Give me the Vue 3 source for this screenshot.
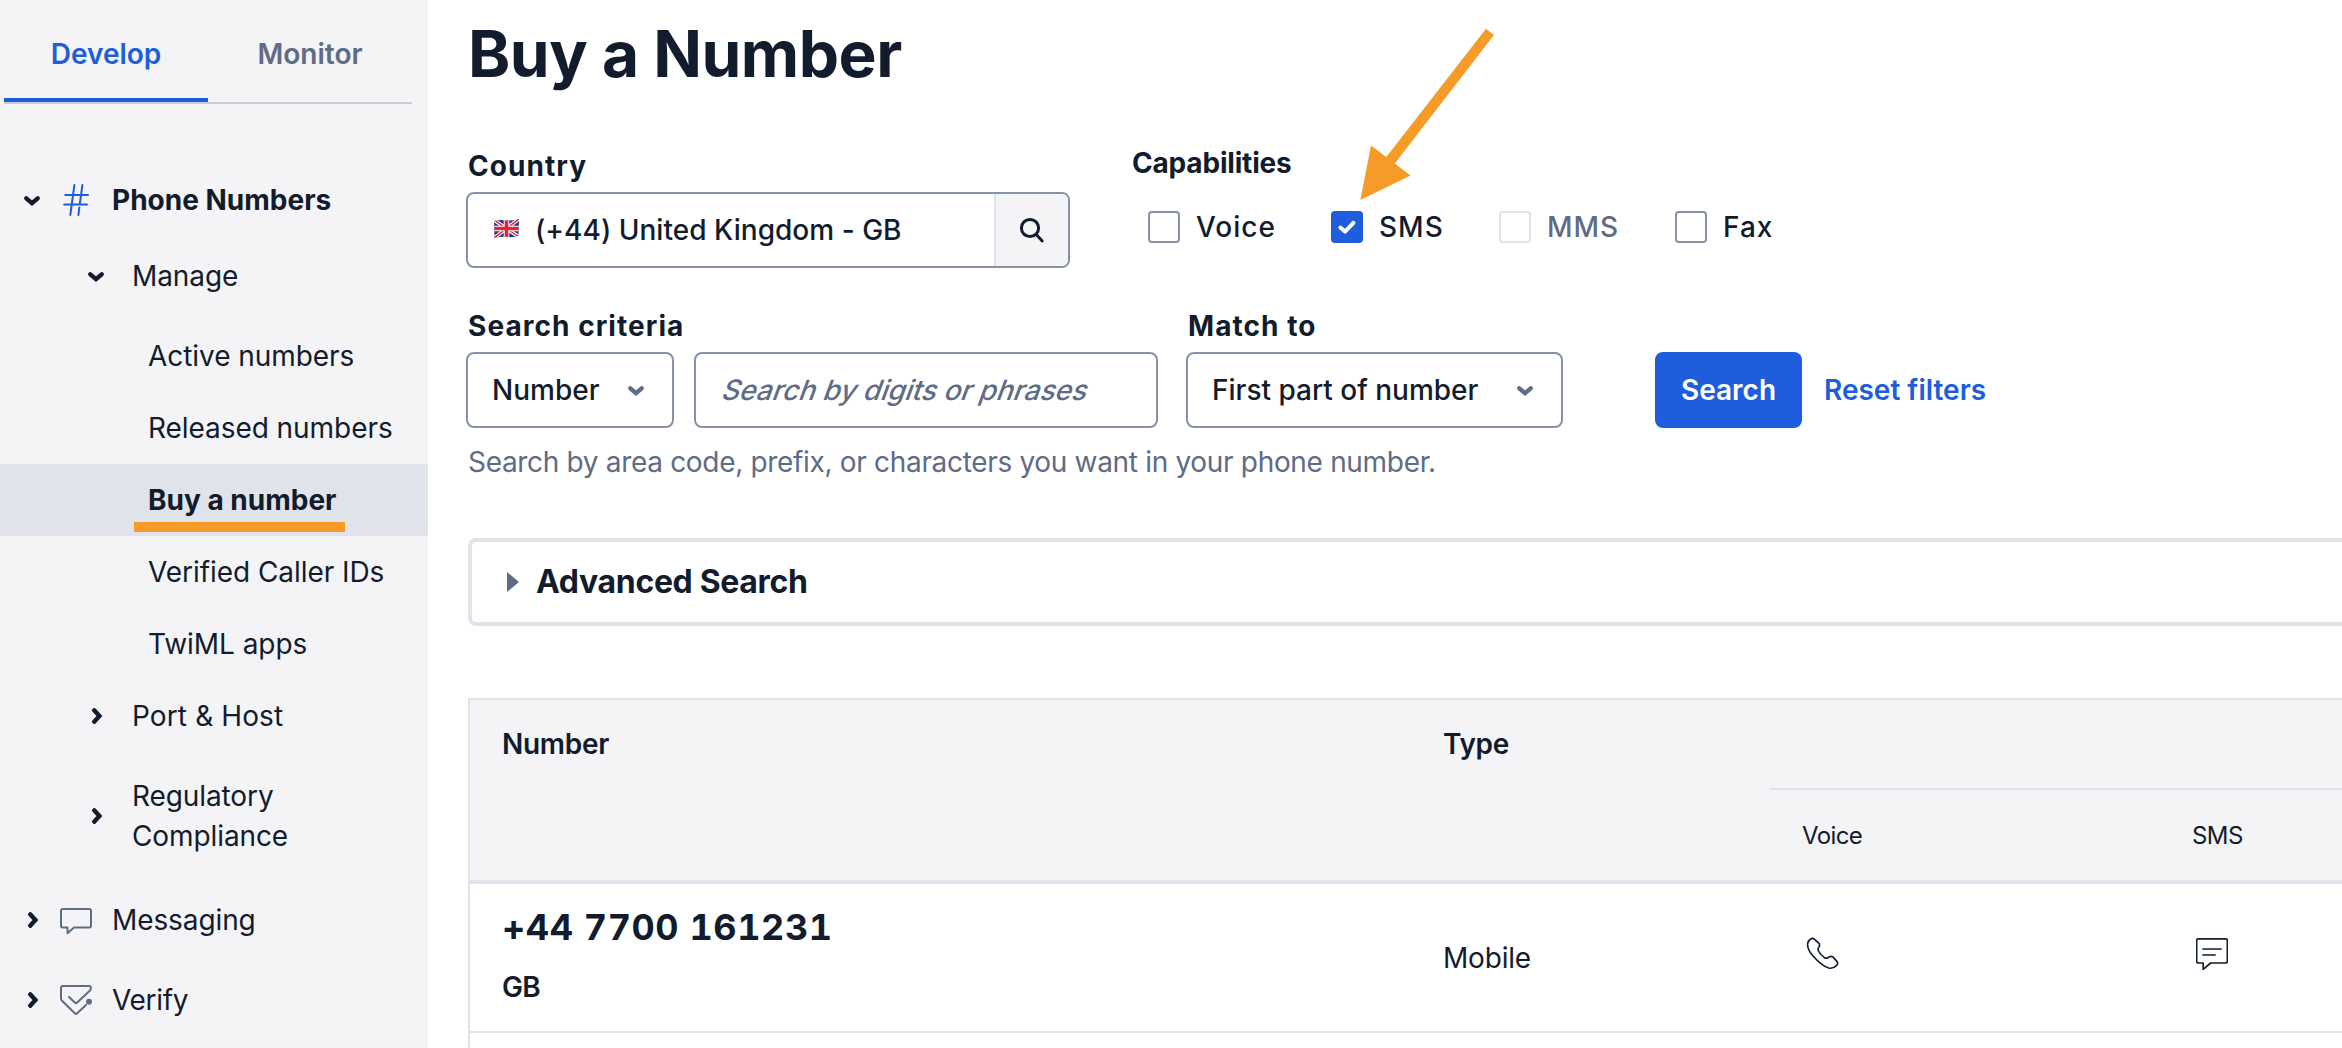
<script setup>
const numberLinks = [
  { label: 'Active numbers' },
  { label: 'Released numbers' },
  { label: 'Buy a number', active: true },
  { label: 'Verified Caller IDs' },
  { label: 'TwiML apps' },
]
const capabilities = [
  { label: 'Voice' },
  { label: 'SMS', checked: true },
  { label: 'MMS', disabled: true },
  { label: 'Fax' },
]
const chevronDown = 'M6.3 10.3 12 15.2 17.7 10.3'
const chevronRight = 'M10.2 6.3 15.4 12 10.2 17.7'
</script>

<template>
  <div class="page">
    <aside class="sidebar">
      <div class="tabs">
        <div class="tab current">Develop</div>
        <div class="tab">Monitor</div>
      </div>

      <nav>
        <div class="row top phone">
          <svg class="chev" viewBox="0 0 24 24"><path :d="chevronDown" /></svg>
          <svg class="product blue" viewBox="0 0 32 32">
            <path d="M14.4 1 10.3 31M22.4 1 20.3 16.500 19.700 20.600M19.300 23.500 18.400 31M5.300 11H28M4.200 20.400H27" />
          </svg>
          <span class="bold">Phone Numbers</span>
        </div>
        <div class="row sub manage">
          <svg class="chev" viewBox="0 0 24 24"><path :d="chevronDown" /></svg>
          <span>Manage</span>
        </div>
        <div v-for="l in numberLinks" :key="l.label" class="row leaf" :class="{ active: l.active }">
          <span>{{ l.label }}</span>
          <i v-if="l.active" class="underline"></i>
        </div>
        <div class="row sub port">
          <svg class="chev" viewBox="0 0 24 24"><path :d="chevronRight" /></svg>
          <span>Port &amp; Host</span>
        </div>
        <div class="row sub regulatory">
          <svg class="chev" viewBox="0 0 24 24"><path :d="chevronRight" /></svg>
          <span>Regulatory<br />Compliance</span>
        </div>
        <div class="row top">
          <svg class="chev" viewBox="0 0 24 24"><path :d="chevronRight" /></svg>
          <svg class="product" viewBox="0 0 32 32">
            <path d="M3 5H29Q31 5 31 7V21.500Q31 23.500 29 23.500H14L7.500 29.200V23.500H3Q1 23.500 1 21.500V7Q1 5 3 5Z" />
          </svg>
          <span>Messaging</span>
        </div>
        <div class="row top verify">
          <svg class="chev" viewBox="0 0 24 24"><path :d="chevronRight" /></svg>
          <svg class="product" viewBox="0 0 32 32">
            <path d="M9 13 14.800 18.500Q16 19.600 17.200 18.500L30 6.500Q31.500 4.500 30.500 2.500Q30 2 28.500 2H3Q1 2 1 4V14.500Q1 15.800 2 16.800L14.800 29.300Q16 30.500 17.200 29.300L26 21" />
            <circle cx="29" cy="17.700" r="3" />
          </svg>
          <span>Verify</span>
        </div>
      </nav>
    </aside>

    <main>
      <h1>Buy a Number</h1>

      <div class="filters first">
        <div class="country">
          <label>Country</label>
          <div class="field combo">
            <svg class="flag" viewBox="0 0 25 19">
              <clipPath id="wave"><path d="M0 2Q6 .5 12 1.500Q18 2 25 0L24.500 17Q18 18.800 12 17.800Q6 17.200 .5 19Z" /></clipPath>
              <g clip-path="url(#wave)">
                <path fill="#233a83" d="M0 0H25V19H0Z" />
                <path stroke="#fff" stroke-width="3.600" d="M0 1 25 18M25 0 0 19" />
                <path stroke="#d8213b" stroke-width="1.400" d="M0 1 25 18M25 0 0 19" />
                <path stroke="#fff" stroke-width="5.600" d="M12.500 0V19M0 9.500H25" />
                <path stroke="#dd2540" stroke-width="3.600" d="M12.500 0V19M0 9.500H25" />
              </g>
            </svg>
            <span class="value">(+44) United Kingdom - GB</span>
            <span class="addon">
              <svg viewBox="0 0 28 28"><circle cx="12" cy="12" r="8.600" /><path d="M18.300 18.600 24.200 25" /></svg>
            </span>
          </div>
        </div>
        <div class="caps">
          <div class="caps-title">Capabilities</div>
          <div class="checks">
            <div v-for="c in capabilities" :key="c.label" class="check" :class="{ checked: c.checked, disabled: c.disabled }">
              <span class="box">
                <svg v-if="c.checked" viewBox="0 0 32 32"><path d="M9.300 16.600 14 20.600 22.400 11.800" /></svg>
              </span>
              <span>{{ c.label }}</span>
            </div>
          </div>
        </div>
      </div>

      <div class="filters second">
        <div>
          <label>Search criteria</label>
          <div class="pair">
            <div class="field select criteria">
              <span>Number</span>
              <svg class="chev" viewBox="0 0 24 24"><path :d="chevronDown" /></svg>
            </div>
            <div class="field query"><span>Search by digits or phrases</span></div>
          </div>
        </div>
        <div>
          <label>Match to</label>
          <div class="field select match">
            <span>First part of number</span>
            <svg class="chev" viewBox="0 0 24 24"><path :d="chevronDown" /></svg>
          </div>
        </div>
        <div class="search">Search</div>
        <div class="reset">Reset filters</div>
      </div>
      <p class="help">Search by area code, prefix, or characters you want in your phone number.</p>

      <div class="advanced">
        <svg viewBox="0 0 12 20"><path d="M0 0 12 10 0 20Z" /></svg>
        <span>Advanced Search</span>
      </div>

      <div class="table">
        <div class="thead">
          <div class="th">Number</div>
          <div class="th">Type</div>
          <div class="group">
            <div class="group-top"></div>
            <div class="group-cols"><span>Voice</span><span>SMS</span></div>
          </div>
        </div>
        <div class="tr">
          <div class="td number">
            <strong>+44 7700 161231</strong>
            <b>GB</b>
          </div>
          <div class="td">Mobile</div>
          <div class="td">
            <svg class="cap phone-icon" viewBox="46 34 100 100">
              <path d="M60 40Q66 36 72 41L84 52Q89 57 86 63Q81 69 83 75Q88 86 101 96Q107 100 112 97Q120 90 128 95L139 107Q145 114 139 120Q128 131 115 128Q94 122 66 90Q49 70 51 54Q52 46 60 40Z" />
            </svg>
          </div>
          <div class="td">
            <svg class="cap" viewBox="48 39 96 96">
              <path d="M55 41.500H137Q142 41.500 142 46.500V109Q142 114 137 114H92L69.500 133V114H55Q50 114 50 109V46.500Q50 41.500 55 41.500ZM67 72H125M67 90H107" />
            </svg>
          </div>
        </div>
      </div>
    </main>

    <svg class="arrow" viewBox="0 0 140 180">
      <path d="M.4 180 11 125.500 26.300 137 126 8.700 134 15 34.800 143.500 50.500 155.500Z" />
    </svg>
  </div>
</template>

<style>
body {
  margin: 0;
  background: #fff;
}
</style>

<style scoped>
.page {
  position: relative;
  display: flex;
  height: 1048px;
  overflow: hidden;
  font: 400 28px/40px Inter, "Liberation Sans", sans-serif;
  color: #121c2d;
  white-space: nowrap;
}
.page * { box-sizing: border-box; }
svg { display: block; flex: none; fill: none; }

.sidebar {
  flex: none;
  width: 428px;
  background: #f4f4f6;
}
.tabs {
  display: flex;
  width: 408px;
  height: 104px;
  margin-left: 4px;
  border-bottom: 2px solid #cacdd8;
}
.tab {
  flex: 1;
  padding-top: 34px;
  text-align: center;
  font-weight: 600;
  color: #606b85;
}
.tab.current {
  color: #1e5ddc;
  border-bottom: 4px solid #1e5ddc;
}
nav { padding-top: 56px; }
.row {
  position: relative;
  display: flex;
  align-items: center;
  height: 80px;
  letter-spacing: -.1px;
}
.verify { letter-spacing: -.3px; }
.bold { font-weight: 700; letter-spacing: 0; }
.chev {
  width: 24px;
  height: 24px;
  stroke: #121c2d;
  stroke-width: 4.4;
  stroke-linecap: round;
}
.top { padding-left: 20px; }
.product {
  width: 32px;
  height: 32px;
  margin: 0 20px 0 16px;
  stroke: #606b85;
  stroke-width: 2;
  stroke-linecap: round;
  stroke-linejoin: round;
}
.product circle { fill: #606b85; stroke: none; }
.product.blue { stroke: #1e5ddc; }
.sub {
  height: 72px;
  padding-left: 84px;
  gap: 24px;
}
.port { letter-spacing: .12px; }
.manage { margin-bottom: 8px; }
.leaf {
  height: 72px;
  padding-left: 148px;
  letter-spacing: -.06px;
}
.leaf.active { font-weight: 700; letter-spacing: 0; background: #e1e3ea; }
.underline {
  position: absolute;
  left: 134px;
  top: 58px;
  width: 211px;
  height: 10px;
  background: #f69a28;
}
.regulatory { height: 128px; }

main {
  flex: none;
  width: 1914px;
  padding-left: 38px;
}
h1 {
  margin: 14px 0 48px 2px;
  font-size: 64px;
  line-height: 80px;
  font-weight: 700;
  letter-spacing: -.5px;
}
.filters { display: flex; }
.filters label {
  display: block;
  height: 40px;
  margin: 0 0 6px 2px;
  font-weight: 700;
  letter-spacing: 1.05px;
}
.field {
  display: flex;
  align-items: center;
  height: 76px;
  border: 2px solid #8891aa;
  border-radius: 8px;
  font-weight: 500;
}
.country { padding-top: 4px; }
.combo { width: 604px; padding-left: 26px; overflow: hidden; }
.flag { width: 25px; height: 19px; margin-top: -3px; }
.value { flex: 1; margin-left: 16px; letter-spacing: .03px; }
.addon {
  display: flex;
  align-items: center;
  justify-content: center;
  width: 74px;
  height: 72px;
  border-left: 2px solid #e1e3ea;
  background: #f4f4f6;
}
.addon svg {
  width: 28px;
  height: 28px;
  stroke: #121c2d;
  stroke-width: 3;
  stroke-linecap: round;
}
.caps { margin-left: 62px; }
.caps-title { margin-top: 1px; font-weight: 700; letter-spacing: -.18px; }
.checks {
  display: grid;
  grid-template-columns: 183px 168px 176px auto;
  margin: 24px 0 0 16px;
}
.check {
  display: flex;
  align-items: center;
  gap: 16px;
  font-weight: 500;
  letter-spacing: 1px;
}
.box {
  width: 32px;
  height: 32px;
  border: 2px solid #8891aa;
  border-radius: 4px;
}
.checked .box { border: 0; background: #1e5ddc; }
.box svg {
  width: 32px;
  height: 32px;
  stroke: #fff;
  stroke-width: 4;
  stroke-linecap: round;
  stroke-linejoin: round;
}
.disabled { color: #606b85; }
.disabled .box { border-color: #e1e3ea; }

.second { margin-top: 38px; }
.pair { display: flex; gap: 20px; }
.select { justify-content: space-between; padding: 0 24px; }
.select .chev { stroke: #606b85; }
.criteria { width: 208px; }
.query {
  width: 464px;
  padding-left: 24px;
  color: #606b85;
}
.query span {
  transform: skewX(-20deg);
  transform-origin: 0 75%;
}
.second > div:nth-child(2) { margin-left: 28px; }
.match { width: 377px; }
.search {
  width: 147px;
  height: 76px;
  margin: 46px 0 0 92px;
  border-radius: 8px;
  background: #1e5ddc;
  color: #fff;
  font-weight: 600;
  line-height: 76px;
  text-align: center;
}
.reset {
  margin: 46px 0 0 22px;
  color: #1e5ddc;
  font-weight: 600;
  line-height: 76px;
}
.help {
  margin: 14px 0 0 2px;
  color: #606b85;
  letter-spacing: -.32px;
}
.advanced {
  display: flex;
  align-items: center;
  height: 88px;
  margin: 56px 0 0 2px;
  padding-left: 35px;
  border: 4px solid #e1e3ea;
  border-right: 0;
  border-radius: 8px 0 0 8px;
  font-size: 32px;
  font-weight: 700;
  letter-spacing: -.33px;
}
.advanced svg { width: 12px; height: 20px; margin-right: 17px; fill: #606b85; }

.table {
  height: 350px;
  margin: 72px 0 0 2px;
  border: solid #e1e3ea;
  border-width: 2px 0 0 2px;
}
.thead, .tr {
  display: grid;
  grid-template-columns: 941px 359px 390px 1fr;
}
.thead {
  height: 184px;
  border-bottom: 4px solid #e1e3ea;
  background: #f4f4f6;
}
.th { padding: 24px 32px; font-weight: 600; letter-spacing: -.3px; }
.group { grid-column: span 2; }
.group-top { height: 90px; border-bottom: 2px solid #e1e3ea; }
.group-cols {
  display: grid;
  grid-template-columns: 390px 1fr;
  height: 90px;
  padding-left: 32px;
  font-size: 24px;
  line-height: 92px;
  letter-spacing: -.6px;
}
.tr { height: 149px; border-bottom: 2px solid #e1e3ea; }
.td { display: flex; align-items: center; padding-left: 32px; letter-spacing: -.2px; }
.number { flex-direction: column; align-items: flex-start; padding-top: 15px; }
.number strong {
  font-size: 36px;
  line-height: 56px;
  font-variant-numeric: tabular-nums;
  letter-spacing: .58px;
}
.number b { margin-top: 12px; font-weight: 600; letter-spacing: -.6px; }
.cap {
  width: 32px;
  height: 32px;
  margin: 0 0 8px 4px;
  stroke: #121c2d;
  stroke-width: 5;
  stroke-linejoin: round;
}
.phone-icon { width: 33px; height: 33px; margin-bottom: 9px; }

.arrow {
  position: absolute;
  left: 1360px;
  top: 20px;
  width: 140px;
  height: 180px;
  fill: #f69a28;
}
</style>
